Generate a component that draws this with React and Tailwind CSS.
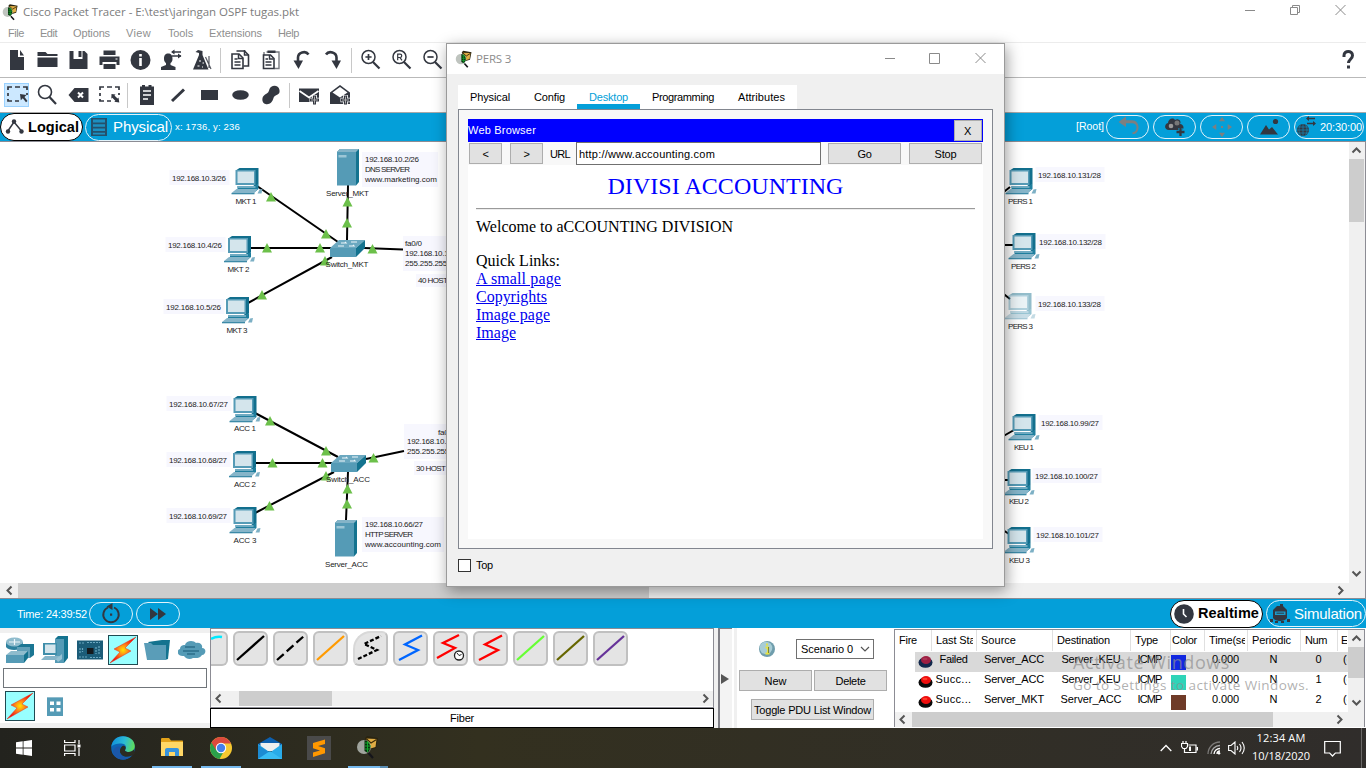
import React, { useLayoutEffect, useRef } from "react";

/* Text whose tracking is computed so that it fills `w` pixels. */
function T({ w, className = "", children }) {
  const ref = useRef(null);
  useLayoutEffect(() => {
    const el = ref.current;
    el.style.letterSpacing = "0px";
    const natural = el.getBoundingClientRect().width;
    el.style.letterSpacing = (w - natural) / String(children).length + "px";
  }, [w, children]);
  return (
    <span ref={ref} className={"inline-block shrink-0 whitespace-pre " + className}>
      {children}
    </span>
  );
}

function Ic({ children, size = 24, className = "" }) {
  return (
    <svg width={size} height={size} viewBox={`0 0 ${size} ${size}`} className={"shrink-0 " + className} fill="#333740">
      {children}
    </svg>
  );
}

function Cell({ children, active }) {
  return (
    <div className="flex h-[34px] w-[31px] shrink-0 items-center justify-center">
      <div className={active ? "flex h-6 w-[25px] items-center justify-center bg-[#cce8ff] outline outline-1 -outline-offset-1 outline-[#99d1ff]" : "flex"}>
        <Ic>{children}</Ic>
      </div>
    </div>
  );
}

const Sep = () => <div className="mx-[3px] h-[25px] w-px shrink-0 bg-[#c8c8c8]" />;

function TracerLogo({ className = "" }) {
  return (
    <svg width="24" height="24" viewBox="0 0 24 24" className={"shrink-0 " + className}>
      <path d="M9 3l2-2 11 2-2 10-7 2z" fill="#2a2410" />
      <path d="M10 3.500l10.500.5-1 8-5 1.500z" fill="#e0ad45" />
      <path d="M10 3.500l5 4.500 5.500-3.500" fill="none" stroke="#3a2a08" strokeWidth="1.200" />
      <circle cx="8" cy="12" r="7" fill="#b4bab4" opacity=".85" />
      <path d="M8.500 5.200a7 7 0 0 1 3 12.500L8.500 16z" fill="#06320c" />
      <path d="M9 8h5M9 11h6M9 14h5M11.500 6v11" stroke="#14a52c" strokeWidth="1" />
      <path d="M12.500 18l4.500 5" stroke="#15151a" strokeWidth="2.200" />
    </svg>
  );
}

const Plus = ({ x, y }) => (
  <g>
    <path d={`M${x} ${y - 5}v10M${x - 5} ${y}h10`} stroke="#fff" strokeWidth="4.6" />
    <path d={`M${x} ${y - 4.5}v9M${x - 4.5} ${y}h9`} stroke="#333740" strokeWidth="3" />
    <path d={`M${x} ${y - 3.5}v7M${x - 3.5} ${y}h7`} stroke="#aaa" strokeWidth="1" />
  </g>
);

const Lens = ({ children }) => (
  <g fill="none" stroke="#333740" strokeWidth="1.5">
    <circle cx="9.5" cy="9" r="6.5" />
    <path d="M14 14l6.500 6.500" strokeWidth="2.200" />
    {children}
  </g>
);

function MenuBar() {
  return (
    <div className="flex h-5 items-center text-[11px] text-[#8f8f8f]">
      <T w={16} className="ml-2">File</T>
      <T w={17} className="ml-4">Edit</T>
      <T w={37} className="ml-4">Options</T>
      <T w={25} className="ml-4">View</T>
      <T w={25} className="ml-[17px]">Tools</T>
      <T w={53} className="ml-4">Extensions</T>
      <T w={21} className="ml-4">Help</T>
    </div>
  );
}

function MainToolbar() {
  return (
    <div className="flex h-[35px] items-center border-b border-[#b9b9b9]">
      <Cell><path d="M6 2h8v7h6v13H6zM16 2l4 5.500h-4z" /></Cell>
      <Cell><path d="M2.500 4h8l2 2h10v2h-20zM2.500 9.500h20V19h-20z" /></Cell>
      <Cell>
        <path d="M3.500 3h15l3 3v15h-18z" />
        <path d="M7.500 3h9v8h-9z" fill="#fff" />
        <path d="M12.500 3h3v6h-3z" />
      </Cell>
      <Cell>
        <path d="M6.500 2.500h12V7h-12zM2.500 8.500h20V17h-3v-3h-14v3h-3z" />
        <path d="M6.500 16h12v5h-12z" />
        <path d="M18.500 10.500h2v1h-2z" fill="#fff" />
      </Cell>
      <Cell>
        <circle cx="12.500" cy="12" r="10" />
        <path d="M11.200 6h2.600v2.400h-2.600zM11.200 10h2.600v8h-2.600z" fill="#fff" />
      </Cell>
      <Cell>
        <path d="M5 11c0-4 1.500-5.500 4.200-5.500S13.500 7 13.500 11c0 2-1 3.500-2 4v2l5 2v3H2v-3l5-2v-2c-1-.5-2-2-2-4z" />
        <path d="M13 4h9M13 8h9" stroke="#333740" strokeWidth="1.600" />
        <path d="M15.500 1.500L12 4l3.500 2.500zM19 5.500L22.500 8 19 10.500z" />
      </Cell>
      <Cell>
        <path d="M5.500 4l2.500-2 4.500 1v4l6 14.500H3L9 7V5z" />
        <path d="M9 13h2M12.500 15h1.500M7.500 18h2M12 19h1" stroke="#fff" strokeWidth="1.200" />
        <path d="M15.500 9l5.500 12M19 8v12" stroke="#555860" strokeWidth="1.200" fill="none" />
      </Cell>
      <Sep />
      <Cell>
        <path d="M8.500 3h8l4 4v11h-5" fill="none" stroke="#333740" strokeWidth="1.600" />
        <path d="M4 6h7l4 4v10.500H4z" fill="#fff" stroke="#333740" strokeWidth="1.600" />
        <path d="M10.500 6v4.500H15M6.500 11h3M6.500 14h6M6.500 17h6M16.500 2v5h4" fill="none" stroke="#333740" strokeWidth="1.500" />
      </Cell>
      <Cell>
        <path d="M7.500 4H20v16.500h-4.500M5 7V4" fill="none" stroke="#777a80" strokeWidth="1.400" />
        <path d="M8.500 2.500h8V5h-8z" />
        <path d="M4.500 7h7l3.500 3.500v10H4.500z" fill="#fff" stroke="#333740" strokeWidth="1.600" />
        <path d="M10.500 7v4h4M6.500 11H9M6.500 14h6M6.500 17h6" fill="none" stroke="#333740" strokeWidth="1.500" />
      </Cell>
      <Cell>
        <path d="M8 14V9.500C8 4.500 15.500 2 18.500 6.500" fill="none" stroke="#333740" strokeWidth="2.600" />
        <path d="M3.500 12.500h9.500L8.500 21z" />
      </Cell>
      <Cell>
        <path d="M15.500 14V9.500C15.500 4.500 8 2 5 6.500" fill="none" stroke="#333740" strokeWidth="2.600" />
        <path d="M10.500 12.500H20L15.500 21z" />
      </Cell>
      <Sep />
      <Cell><Lens><path d="M9.500 5.900v6.200M6.400 9h6.200" strokeWidth="1.700" /></Lens></Cell>
      <Cell><Lens><path d="M7.700 12.300V6.200h2.400a1.600 1.600 0 0 1 0 3.300H7.700M10 9.600l2 2.700" strokeWidth="1.200" /></Lens></Cell>
      <Cell><Lens><path d="M6.400 9h6.200" strokeWidth="1.700" /></Lens></Cell>
      <div className="ml-auto mr-[6px] flex">
        <Ic>
          <path d="M8 9V7.500C8 2 16.500 2 16.500 7.500c0 3.500-4 4-4 7.500" fill="none" stroke="#333740" strokeWidth="3" />
          <path d="M11 17.500h3v3h-3z" />
        </Ic>
      </div>
    </div>
  );
}

const dashRect = <path d="M3 7V4h4M10 4h5M18 4h4v3M3 10v3M3 16v2h4M10 18h4M22 10v2" fill="none" stroke="#333740" strokeWidth="1.700" />;

function EditToolbar() {
  return (
    <div className="flex h-[35px] items-center border-b border-[#a9a9a9]">
      <div className="w-px" />
      <div className="-mr-px flex"><Cell active>{dashRect}<path d="M15 11l6.500 1-2 2 3 4-1.500 1.300-3.200-4-2 2z" /></Cell></div>
      <Cell>
        <g fill="none" stroke="#333740" strokeWidth="1.600"><circle cx="10" cy="9" r="6.500" /><path d="M14.500 14l6.500 7" strokeWidth="2.200" /></g>
      </Cell>
      <Cell>
        <path d="M2.500 12l6-7h14v14h-14z" />
        <path d="M12 9.500l5 5M17 9.500l-5 5" stroke="#fff" strokeWidth="2" />
      </Cell>
      <Cell>{dashRect}<path d="M14.500 11l4 .5-1 1 3 3 1-1 .8 5-5-.8 1-1-3-3-1 1z" /></Cell>
      <Sep />
      <Cell>
        <path d="M5 3.500h2V2h3v1.500h3.500V2h3v1.500H19V22H5z" />
        <path d="M8 8h8M8 12h8M8 16h5" stroke="#fff" strokeWidth="1.700" />
      </Cell>
      <Cell><path d="M6 18L18 6.500" stroke="#333740" strokeWidth="3" /></Cell>
      <Cell><path d="M4 7h17v10H4z" /></Cell>
      <Cell><ellipse cx="12.500" cy="12" rx="8.300" ry="4.800" /></Cell>
      <Cell><path d="M10.500 6c1-4 9-5 10 1s-5 4-6 8-4 7-8 6-4-7-1-9 4-2 5-6z" /></Cell>
      <Sep />
      <Cell>
        <path d="M2 5.500h20V19H2z" />
        <path d="M2.500 8l9.500 6.500L21.500 8" fill="none" stroke="#fff" strokeWidth="1.800" />
        <Plus x={17.500} y={17} />
      </Cell>
      <Cell>
        <path d="M2 9.500L12 2l10 7.500V21H2z" />
        <path d="M4.500 9.500L12 4l7.500 5.500-7.500 5z" fill="#fff" />
        <Plus x={17.500} y={17} />
      </Cell>
    </div>
  );
}

function Pill({ children, className }) {
  return <div className={"flex shrink-0 items-center rounded-full border border-[#e3f3fa] " + className}>{children}</div>;
}

function NavBar() {
  return (
    <div className="flex h-[29px] items-center border-b border-[#8c8c94] bg-[#049fd9] text-white">
      <div className="flex h-[28px] w-[83px] shrink-0 items-center rounded-full border border-black bg-white text-black">
        <Ic size={20} className="ml-1">
          <path d="M2.500 14.500L9 5l7.500 9" fill="none" stroke="#333740" strokeWidth="1.500" />
          <circle cx="9" cy="4.500" r="2.200" /><circle cx="3" cy="14.500" r="2.200" /><circle cx="16.500" cy="14.500" r="2.200" />
        </Ic>
        <T w={51} className="ml-[3px] pt-px text-[14.500px] font-bold">Logical</T>
      </div>
      <Pill className="ml-[2px] h-[27px] w-[87px]">
        <Ic size={20} className="ml-[3px]">
          <path d="M2 1h16v18H2z" fill="#24506b" />
          <path d="M4 2.500h12v3H4zM4 7.300h12v2.500H4zM4 11.500h12V14H4zM4 15.800h12v1.700H4z" fill="#1c8fc0" />
        </Ic>
        <T w={55} className="ml-[4px] pt-px text-[15px]">Physical</T>
      </Pill>
      <T w={65} className="ml-[3px] text-[9.500px]">x: 1736, y: 236</T>
      <T w={28} className="ml-auto mr-[2px] text-[10.500px]">[Root]</T>
      <Pill className="mr-1 h-6 w-[43px] justify-center">
        <Ic><path d="M10 1.500v3.700h6c4.500 0 6.500 3.500 6.500 7s-2 7-6 7v-2c3 0 4-2.500 4-5 0-2.300-1.500-4-4.500-4h-6V12l-7.500-5z" fill="#7d7f80" /></Ic>
      </Pill>
      <Pill className="mr-1 h-6 w-[43px] justify-center">
        <Ic>
          <path d="M6 15c-5 0-5-6-1-7 0-4 5-6 7-3 3-2 7 1 5 4 4 0 5 6 1 6z" />
          <circle cx="8" cy="11" r="2.300" fill="#999" /><circle cx="14" cy="8" r="2.500" fill="#777" />
          <path d="M17.500 13v8M13.500 17h8" stroke="#049fd9" strokeWidth="4" /><path d="M17.500 13v8M13.500 17h8" stroke="#333740" strokeWidth="2.300" />
        </Ic>
      </Pill>
      <Pill className="mr-1 h-6 w-[43px] justify-center">
        <Ic><path d="M12 2l3 4.300H9zM12 22l3-4.300H9zM2 12l4.300-3v6zM22 12l-4.300-3v6zM11 11h2v2h-2z" fill="#7d7f80" /></Ic>
      </Pill>
      <Pill className="mr-1 h-6 w-[43px] justify-center">
        <Ic><circle cx="18.500" cy="6.500" r="2.600" /><path d="M3 19.500l6-9.500 3 4.500 3-2.500 6 7.500z" /></Ic>
      </Pill>
      <Pill className="mr-[2px] h-6 w-[70px]">
        <Ic>
          <circle cx="8" cy="15" r="6" />
          <path d="M2 15h12M3 12h10M3 18h10M8 9v12M5.500 9.500c-2 4-2 7 0 11M10.500 9.500c2 4 2 7 0 11" fill="none" stroke="#1782ad" strokeWidth=".8" />
          <path d="M12 3.500h8M12 8.500h8" stroke="#333740" strokeWidth="1.500" /><path d="M14 1L11 3.500 14 6zM18 6l3 2.500-3 2.500z" />
        </Ic>
        <T w={42} className="ml-[1px] text-[11px]">20:30:00</T>
      </Pill>
    </div>
  );
}

/* ---------- topology ---------- */
const PC = ({ x, y, faded }) => (
  <g transform={`translate(${x} ${y})`} opacity={faded ? 0.45 : 1}>
    <path d="M1 2l3-2h19v16l-3 3z" fill="#126f8d" />
    <path d="M0 2h20v15H0z" fill="#559bb6" />
    <path d="M2 3.500h16.500V15H2z" fill="#d4e5ec" />
    <path d="M2 18h17l4-2v5l-3 2.500H2z" fill="#1f7f9e" />
    <path d="M2 18h18v2H2z" fill="#6fabc2" />
    <path d="M-4 25l5-4h21l-3 4z" fill="#86b5c9" />
    <path d="M-4 25h23v1.300H-4z" fill="#3d8aa7" />
    <path d="M22 25.500l2-4 3-.5-1 4.500z" fill="#7db0c5" />
  </g>
);
const Server = ({ x, y }) => (
  <g transform={`translate(${x} ${y})`}>
    <path d="M0 3l3-3h19v33l-3 3.500z" fill="#14738f" />
    <path d="M0 3l3-3h19l-3 3z" fill="#84b4c8" />
    <path d="M0 3h19v33.500H0z" fill="#559bb6" />
    <path d="M1.500 6h8v2.500h-8z" fill="#9cc6d6" />
  </g>
);
const Switch = ({ x, y }) => (
  <g transform={`translate(${x} ${y})`}>
    <path d="M0 8l9-8h26l-9 8z" fill="#6ba8c0" />
    <path d="M26 8l9-8v8l-9 9z" fill="#14738f" />
    <path d="M0 8h26v9H0z" fill="#559bb6" />
    <path d="M11 3h5l-1-1M21 2h6M8 6h6M19 6h5l-1-1" fill="none" stroke="#eef6fa" strokeWidth="1.100" />
  </g>
);

const pcs = [
  [235.500, 168, "MKT 1", 246, 204, 21], [228, 236, "MKT 2", 238.5, 272, 22], [226, 297, "MKT 3", 237, 333, 21],
  [233.500, 396, "ACC 1", 245, 431, 22], [233, 451, "ACC 2", 245, 487, 22], [233.500, 507, "ACC 3", 245, 543, 23],
  [1009.500, 168, "PERS 1", 1020.5, 204, 25], [1012.500, 233, "PERS 2", 1023.5, 269, 25], [1008.500, 293, "PERS 3", 1020.5, 329, 25],
  [1012.500, 414, "KEU 1", 1024, 450, 20], [1007.500, 469, "KEU 2", 1019, 504, 20], [1007.500, 527, "KEU 3", 1019.5, 563, 21],
];
const notes = [
  [172, 181, 54, "192.168.10.3/26"], [168, 248, 54, "192.168.10.4/26"], [166, 310, 55, "192.168.10.5/26"],
  [169, 407, 59, "192.168.10.67/27"], [169, 463, 58, "192.168.10.68/27"], [169, 519, 58, "192.168.10.69/27"],
  [1038, 178, 63, "192.168.10.131/28"], [1039, 245, 63, "192.168.10.132/28"], [1038, 307, 63, "192.168.10.133/28"],
  [1041, 426, 58, "192.168.10.99/27"], [1035, 479, 63, "192.168.10.100/27"], [1036, 538, 63, "192.168.10.101/27"],
];
const texts = [
  [365, 162, 54, "192.168.10.2/26"], [365, 172, 45, "DNS SERVER"], [365, 182, 72, "www.marketing.com"],
  [326, 196, 43, "Server_MKT"], [325.500, 267, 43, "Switch_MKT"], [405, 246, 17, "fa0/0"],
  [405, 256, 54, "192.168.10.1/26"], [405, 266, 57, "255.255.255.192"], [418, 283, 30, "40 HOST"],
  [438, 435, 17, "fa0/0"], [407, 444, 58, "192.168.10.65/27"], [407, 454, 57, "255.255.255.224"], [416, 471, 30, "30 HOST"],
  [326, 482, 44, "Switch_ACC"], [325, 567, 43, "Server_ACC"],
  [365, 527, 58, "192.168.10.66/27"], [365, 537, 48, "HTTP SERVER"], [365, 547, 76, "www.accounting.com"],
];
const links = "M257 186L338 242M250 248H332M248 303L332 257M348 185L347 240M364 248L403 249.500M255 413L338 457M255 463H332M255 513L334 472M366 459L404 451M348 472L346 520M1000 195L1010 187M1000 245H1013M1000 291L1010 299M1000 438L1014 430M1000 480H1008M1000 528L1009 534";
const marks = [[271, 197], [326, 234], [267, 248], [320, 248], [262, 295], [325, 261], [347.500, 202], [347, 223], [372.500, 249], [270, 421], [326, 451], [272.500, 463], [322.500, 463], [269.500, 506], [326, 476], [373.500, 458], [347.500, 489], [347, 504]];

function Topology() {
  return (
    <svg width="1349" height="441" viewBox="0 142 1349 441" className="shrink-0 bg-white" fontFamily="Liberation Sans, Arial, sans-serif" fontSize="8" fill="#222">
      <g fill="#f7f7fe">
        <path d="M362 152h76v35h-76zM403 236h50v35h-50zM416 274h40v13h-40zM404 424h50v35h-50zM414 461h40v14h-40zM362 517h82v35h-82z" />
        {notes.map((n) => <rect key={n[3]} x={n[0] - 2.500} y={n[1] - 11} width={n[2] + 6} height="15" />)}
      </g>
      <path d={links} stroke="#000" strokeWidth="2" fill="none" />
      {pcs.map((p) => <PC key={p[2]} x={p[0]} y={p[1]} faded={p[2] === "PERS 3"} />)}
      <Server x={337} y={149} /><Server x={335} y={520} />
      <Switch x={330} y={240} /><Switch x={331} y={455} />
      {marks.map(([x, y]) => <path key={x + "-" + y} d={`M${x} ${y - 5}l5 9.500h-10z`} fill="#6cc04a" />)}
      {pcs.map((p) => <text key={p[2]} x={p[3] - p[5] / 2} y={p[4]} textLength={p[5]}>{p[2]}</text>)}
      {notes.concat(texts).map((n) => <text key={n[3] + n[1]} x={n[0]} y={n[1]} textLength={n[2]}>{n[3]}</text>)}
    </svg>
  );
}

const arrows = { up: "M4 10l4-4 4 4", down: "M4 6l4 4 4-4", left: "M10 4L6 8l4 4", right: "M6 4l4 4-4 4" };
const Arrow = ({ dir }) => (
  <svg width="15" height="15" viewBox="0.5 0.5 15 15" className="shrink-0"><path d={arrows[dir]} fill="none" stroke="#555" strokeWidth="2" /></svg>
);

function Workspace() {
  return (
    <div className="flex h-[457px] flex-col border-b border-r border-[#8c8c94] bg-[#f0f0f0]">
      <div className="flex h-[441px]">
        <Topology />
        <div className="flex w-[15px] flex-col items-center">
          <div className="flex h-[17px] items-center"><Arrow dir="up" /></div>
          <div className="h-[63px] w-full bg-[#cdcdcd]" />
          <div className="mt-auto pb-[2px]"><Arrow dir="down" /></div>
        </div>
      </div>
      <div className="flex h-[15px] pr-[17px]">
        <div className="w-[18px] pl-[2px]"><Arrow dir="left" /></div>
        <div className="h-full w-[631px] bg-[#cdcdcd]" />
        <div className="ml-auto"><Arrow dir="right" /></div>
      </div>
    </div>
  );
}

function TimeBar() {
  return (
    <div className="flex h-[29px] items-center bg-[#049fd9] text-white">
      <T w={70} className="ml-[17px] pt-px text-[11px]">Time: 24:39:52</T>
      <Pill className="ml-[2px] h-6 w-[44px] justify-center">
        <Ic><path d="M9 5.500A7.700 7.700 0 1 0 15 5.500" fill="none" stroke="#333740" strokeWidth="1.900" /><path d="M7.500 4.500l6-3.500v7zM11 11.500h2.200v2.200H11z" /></Ic>
      </Pill>
      <Pill className="ml-[3px] h-6 w-[44px] justify-center">
        <Ic><path d="M4 6l8 6-8 6zM12 6l8 6-8 6z" /></Ic>
      </Pill>
      <div className="ml-auto flex h-[28px] w-[93px] items-center rounded-full border border-black bg-white text-black">
        <Ic size={20} className="ml-[3px]"><circle cx="10" cy="10" r="9.800" /><path d="M9.500 5v5l3 3" fill="none" stroke="#fff" strokeWidth="1.600" /></Ic>
        <T w={61} className="ml-[4px] pt-px text-[14.500px] font-bold">Realtime</T>
      </div>
      <Pill className="ml-[3px] h-[27px] w-[100px]">
        <Ic size={22} className="ml-[2px]">
          <path d="M8 3h3V1h3v2l4 4v8c-2 4-12 4-14 0V7z" /><path d="M6 8.500h10.500v3.500H6z" fill="#1c9ac8" /><path d="M7.500 10.200h7.500" stroke="#333740" />
          <path d="M1 16h3v3H1zM6 18h3v2H6zM12 18h3v2h-3zM18 16h3v3h-3z" />
        </Ic>
        <T w={68} className="ml-[3px] pt-[2px] text-[15px]">Simulation</T>
      </Pill>
    </div>
  );
}

/* ---------- device dock ---------- */
const Bolt = () => (
  <div className="h-[30px] w-[30px] shrink-0 border border-[#1f4a52] bg-[#98ffff]">
    <svg width="28" height="28" viewBox="0 0 28 28">
      <defs><radialGradient id="flame"><stop offset="0" stopColor="#ffe600" /><stop offset=".45" stopColor="#ff7a1a" /><stop offset="1" stopColor="#f20d0d" /></radialGradient></defs>
      <path d="M27 1L5 13l6 3L1 27l21-12-6-3z" fill="url(#flame)" stroke="#e0341a" strokeWidth=".5" />
    </svg>
  </div>
);

function DeviceTypes() {
  return (
    <div className="flex w-[210px] shrink-0 flex-col border-y-[5px] border-[#f0f0f0] bg-white">
      <div className="flex h-[35px] items-center pb-px pl-[5px]">
        <svg width="30" height="28" viewBox="0 0 30 28" className="shrink-0">
          <path d="M1 6v5c2 4 14 4 17 0V6z" fill="#2d819e" /><ellipse cx="9.500" cy="6" rx="8.500" ry="4.500" fill="#8fbccd" />
          <path d="M4 6h11M9.500 3v6" stroke="#eef6fa" strokeWidth="1.200" />
          <path d="M12 11l4-3h13v11l-4 3H12z" fill="#1b7693" /><path d="M12 11h13v11H12z" fill="#5f9fb8" />
          <path d="M1 19l5-4h17l-4 4z" fill="#8fbccd" /><path d="M1 19h18v8H1z" fill="#559bb6" /><path d="M19 19l4-4v7l-4 5z" fill="#14738f" />
        </svg>
        <svg width="30" height="28" viewBox="0 0 30 28" className="ml-[5px] shrink-0">
          <path d="M15 3l3-3h10v22l-4 5h-9z" fill="#14738f" /><path d="M15 3h9v24h-9z" fill="#559bb6" />
          <path d="M3 7h14v12H3z" fill="#3f8eaa" /><path d="M5 8.500h10.500v8.500H5z" fill="#d4e5ec" />
          <path d="M1 24l4-4h15l-3 4z" fill="#86b5c9" /><path d="M16 23l6-5v5l-4 3z" fill="#96c2d3" />
        </svg>
        <svg width="26" height="20" viewBox="0 0 26 20" className="ml-[7px] shrink-0">
          <path d="M0 .5h26v19H0z" fill="#1b5c78" /><path d="M10 8h6.500v6H10z" fill="#15191d" />
          <path d="M2 3h5M10 2.500h13M2 17h8M13 17.500h11M19 7v7M22 6v8M3 8v5M5.500 8v4" stroke="#6aa7c0" strokeWidth="1.200" strokeDasharray="2 1" />
        </svg>
        <div className="ml-[5px]"><Bolt /></div>
        <svg width="28" height="22" viewBox="0 0 28 22" className="ml-[6px] shrink-0">
          <path d="M4 3l14-2h8l-2 19-3 1z" fill="#14738f" /><path d="M0 4h7l2 2h13v15H3z" fill="#5a9db8" />
        </svg>
        <svg width="28" height="20" viewBox="0 0 28 20" className="ml-[6px] shrink-0">
          <path d="M6 16c-7 1-8-6-4-7 0-4 4-4 5-4 1-5 9-5 11-2 4-1 7 2 6 5 5 0 4 7 0 7-2 4-7 3-9 3-3 2-7 1-9-2z" fill="#559bb6" />
          <path d="M7 7h10M5 11h16M9 14h8" stroke="#2b6f8a" strokeWidth="1.400" />
        </svg>
      </div>
      <div className="mx-[3px] h-[20px] border border-[#70757a] bg-white" />
      <div className="flex items-center pl-[5px] pt-[3px]">
        <Bolt />
        <svg width="16" height="19" viewBox="0 0 16 19" className="ml-[12px]">
          <path d="M0 0h16v19H0z" fill="#559bb6" /><path d="M0 0h16v1H0z" fill="#8fbccd" />
          <path d="M3 4.500h4v3.500H3zM9.500 4.500h4v3.500h-4zM3 11h4v3.500H3zM9.500 11h4v3.500h-4z" fill="#fff" />
        </svg>
      </div>
    </div>
  );
}

const cables = [
  { c: "#000", d: "M4 29L31 5" },
  { c: "#000", d: "M4 29L31 5", dash: "9 4" },
  { c: "#ff9a00", d: "M4 29L31 5" },
  { c: "#000", d: "M5 28L24 19 11 13 28 5", dash: "4 2", corner: true },
  { c: "#0066ff", d: "M6 29L25 19 12 13.500 29 4.500" },
  { c: "#f00", d: "M4 27L22 17 10 12 26 4", clock: true },
  { c: "#f00", d: "M6 29L25 19 12 13.500 29 4.500" },
  { c: "#66ff33", d: "M4 29L31 5" },
  { c: "#666600", d: "M4 29L31 5" },
  { c: "#663399", d: "M4 29L31 5" },
];

function Cables() {
  return (
    <div className="flex w-[504px] shrink-0 flex-col">
      <div className="flex h-[80px] flex-col border border-[#8c8c94] bg-white">
        <div className="flex h-[62px] gap-[5px] overflow-hidden pt-[2px]">
          <div className="h-[35px] w-[17px] rounded-r-md border-2 border-l-0 border-[#c0c0c0] bg-[#e4e4e4]">
            <svg width="14" height="14"><path d="M0 6Q5 3 11 4" fill="none" stroke="#00eaff" strokeWidth="2.500" /></svg>
          </div>
          {cables.map((k, i) => (
            <div key={i} className={(k.corner ? "rounded-tl-[18px] border-l-[#d8d8d8] border-t-[#d8d8d8] " : "rounded-tl-md border-l-[#c0c0c0] border-t-[#c0c0c0] ") + "h-[35px] w-[35px] shrink-0 rounded-r-md rounded-bl-md border-2 border-b-[#c0c0c0] border-r-[#c0c0c0] bg-[#e4e4e4]"}>
              <svg width="35" height="35" viewBox="0 0 35 35" className="-ml-[2px] -mt-[2px]">
                <path d={k.d} fill="none" stroke={k.c} strokeWidth="2.300" strokeDasharray={k.dash} />
                {k.clock && <g><circle cx="26" cy="24.500" r="4.500" fill="#fff" stroke="#222" strokeWidth="1.300" /><path d="M24 22l2 2.500 2.500-1" fill="none" stroke="#222" /></g>}
              </svg>
            </div>
          ))}
        </div>
        <div className="flex h-[15px] bg-[#f0f0f0]">
          <div className="w-[28px]"><Arrow dir="left" /></div>
          <div className="h-full w-[93px] bg-[#cdcdcd]" />
          <div className="ml-auto"><Arrow dir="right" /></div>
        </div>
      </div>
      <div className="flex h-[20px] items-center justify-center border border-black bg-white text-[11px]">
        <T w={24}>Fiber</T>
      </div>
    </div>
  );
}

const Btn = ({ w, className = "", children }) => (
  <div className={"flex shrink-0 items-center justify-center border border-[#adadad] bg-[#e1e1e1] " + className}><T w={w}>{children}</T></div>
);

function Scenario() {
  return (
    <div className="flex w-[157px] shrink-0 flex-col bg-white pl-[2px] text-[11px]">
      <div className="flex pl-[19px] pt-[11px]">
        <svg width="18" height="18" viewBox="0 0 18 18" className="mt-px">
          <circle cx="9" cy="9" r="8" fill="#6f9dac" /><circle cx="8" cy="8" r="6.300" fill="#a8cdd6" />
          <path d="M9 3.500v2M7.500 7.500H10V13M7.500 13.500h4" fill="none" stroke="#e8e23c" strokeWidth="1.800" /><path d="M10.600 7v6" stroke="#55602a" strokeWidth=".8" />
        </svg>
        <div className="ml-5 flex h-5 w-[78px] items-center border border-[#707070] pl-1">
          <T w={52}>Scenario 0</T>
          <svg width="10" height="10" viewBox="0 0 10 10" className="ml-[7px]"><path d="M1 3l4 4 4-4" fill="none" stroke="#555" strokeWidth="1.200" /></svg>
        </div>
      </div>
      <div className="mt-[11px] flex gap-[2px]">
        <Btn w={22} className="h-[21px] w-[73px] pt-px">New</Btn>
        <Btn w={30} className="h-[21px] w-[73px] pt-px">Delete</Btn>
      </div>
      <div className="mt-2 pl-3"><Btn w={117} className="h-[21px] w-[123px] pt-px">Toggle PDU List Window</Btn></div>
    </div>
  );
}

const FireDot = ({ dim }) => (
  <svg width="16" height="14" viewBox="0 0 16 14">
    <ellipse cx="7.500" cy="7.500" rx="7" ry="5.300" fill={dim ? "#12284c" : "#0a0a0a"} />
    <ellipse cx="8" cy="5" rx="5" ry="4" fill={dim ? "#9e1f42" : "#ee0d0d"} />
    <ellipse cx="7" cy="4" rx="2.500" ry="1.300" fill={dim ? "#ab3554" : "#ff3a2a"} />
  </svg>
);

const Head = ({ w, children, className }) => (
  <div className={"flex h-[21px] shrink-0 items-center border-r border-[#e0e0e0] " + className}><T w={w}>{children}</T></div>
);

const rows = [
  { s: "Failed", sw: 28, from: "Server_ACC", to: "Server_KEU", tw: 59, n: "0", sel: true, color: "bg-[#1228e0]" },
  { s: "Succ...", sw: 36, from: "Server_ACC", to: "Server_KEU", tw: 59, n: "1", color: "bg-[#2ed4b8]" },
  { s: "Succ...", sw: 36, from: "Server_MKT", to: "Server_ACC", tw: 61, n: "2", color: "bg-[#6f3b28]" },
];

function PduList() {
  return (
    <div className="flex w-[471px] shrink-0 flex-col pt-px text-[11px]">
      <div className="flex h-[98px] flex-col border-l border-r border-t border-[#8c8c94] bg-white">
        <div className="flex h-[82px]">
          <div className="flex w-[453px] flex-col overflow-hidden">
            <div className="flex h-[22px]">
              <Head w={18} className="w-[37px] pl-[4px]">Fire</Head>
              <div className="flex h-[21px] w-[45px] items-center border-r border-[#e0e0e0] pl-[4px]"><div className="flex w-[37px] overflow-hidden"><T w={54}>Last Status</T></div></div>
              <Head w={35} className="w-[76px] pl-[4px]">Source</Head>
              <Head w={53} className="w-[78px] pl-[4px]">Destination</Head>
              <Head w={23} className="w-[40px] pl-[4px]">Type</Head>
              <Head w={25} className="w-[34px] pl-[1px]">Color</Head>
              <div className="flex h-[21px] w-[43px] items-center border-r border-[#e0e0e0] pl-[4px]"><div className="flex w-[36px] overflow-hidden"><T w={47}>Time(sec)</T></div></div>
              <Head w={39} className="w-[53px] pl-[4px]">Periodic</Head>
              <Head w={22} className="w-[37px] pl-[4px]">Num</Head>
              <div className="flex h-[21px] w-[9px] items-center overflow-hidden pl-[3px]"><T w={18}>Edit</T></div>
            </div>
            {rows.map((r) => (
              <div key={r.n} className="flex h-5 pl-5">
                <div className={"flex h-5 w-[433px] leading-[15px] " + (r.sel ? "bg-[#d9d9d9]" : "")}>
                  <div className="w-[17px] pl-[3px] pt-[3px]"><FireDot dim={r.sel} /></div>
                  <div className="flex w-[43px] justify-center">{<T w={r.sw}>{r.s}</T>}</div>
                  <div className="flex w-[78px] justify-center"><T w={60}>{r.from}</T></div>
                  <div className="flex w-[76px] justify-center"><T w={r.tw}>{r.to}</T></div>
                  <div className="flex w-[41px] justify-center"><T w={24}>ICMP</T></div>
                  <div className="w-[34px] pl-px pt-[3px]"><div className={"h-[15px] w-[15px] " + r.color} /></div>
                  <div className="flex w-[43px] justify-center"><T w={27}>0.000</T></div>
                  <div className="flex w-[53px] justify-center"><T w={8}>N</T></div>
                  <div className="flex w-[37px] justify-center"><T w={6}>{r.n}</T></div>
                  <div className="w-[10px] overflow-hidden pl-[6px]">(edit)</div>
                </div>
              </div>
            ))}
          </div>
          <div className="flex w-[16px] flex-col items-center bg-[#f0f0f0]">
            <div className="flex h-[17px] items-center"><Arrow dir="up" /></div>
            <div className="h-[31px] w-full bg-[#cdcdcd]" />
            <div className="mt-auto pb-[2px]"><Arrow dir="down" /></div>
          </div>
        </div>
        <div className="flex h-[15px] bg-[#f0f0f0] pr-[17px]">
          <div className="w-[17px]"><Arrow dir="left" /></div>
          <div className="h-full w-[361px] bg-[#cdcdcd]" />
          <div className="ml-auto"><Arrow dir="right" /></div>
        </div>
      </div>
    </div>
  );
}

function Dock() {
  return (
    <div className="flex h-[100px] bg-white">
      <DeviceTypes />
      <Cables />
      <div className="w-[4px] shrink-0 bg-[#f0f0f0]" />
      <div className="flex w-[14px] shrink-0 items-center justify-center border-l-2 border-t border-[#7f7f86] bg-[#f3f3f3]">
        <svg width="9" height="10" className="mr-[2px]"><path d="M0 0l8 5-8 5z" fill="#555" /></svg>
      </div>
      <div className="w-[5px] shrink-0 border-l-2 border-white bg-[#f0f0f0]" />
      <Scenario />
      <PduList />
    </div>
  );
}

/* ---------- taskbar ---------- */
const Task = ({ children, run }) => (
  <div className="flex h-10 w-[49px] shrink-0 flex-col items-center justify-end">
    <div className="flex h-[38px] items-center pt-px">{children}</div>
    <div className={"h-[2px] w-10 " + (run || "")} />
  </div>
);

function Taskbar() {
  return (
    <div className="flex h-10 items-center bg-gradient-to-r from-[#23231e] via-[#33301f] via-35% to-[#302d2b] font-['Open_Sans','Noto_Sans',sans-serif] text-white">
      <Task>
        <svg width="16" height="16" viewBox="0 0 16 16" fill="#fff" className="mr-px"><path d="M0 2.300l6.700-1v6.300H0zM7.500 1.200L16 0v7.600H7.500zM0 8.400h6.700v6.300L0 13.800zM7.500 8.400H16V16l-8.500-1.200z" /></svg>
      </Task>
      <Task>
        <svg width="17" height="16" viewBox="0 0 17 16" fill="none" stroke="#fff" strokeWidth="1.200" className="mr-[3px]"><path d="M.600 0v2.500H11V0M.600 16v-2.500H11V16M.600 5H11v6H.600zM15 0v4M15 8v8" /><path d="M13.500 4.500h3v3h-3z" fill="#fff" stroke="none" /></svg>
      </Task>
      <Task>
        <svg width="24" height="24" viewBox="0 0 24 24">
          <defs><linearGradient id="edge" x1="0" x2="1" y1=".3" y2=".5"><stop offset="0" stopColor="#0f8fdb" /><stop offset=".55" stopColor="#2bbbd5" /><stop offset="1" stopColor="#5fdc5a" /></linearGradient></defs>
          <circle cx="12" cy="12" r="11.800" fill="#0d64b5" />
          <path d="M.300 11C1 4 6 .2 12 .2S23.800 4 23.800 10c0 4-3 6-6.500 6-2 0-4-1-3-2.500 2-3-.3-6-4-6C5 7.500 1.500 9 .300 11z" fill="url(#edge)" />
          <path d="M14.300 13.500c-1 1.500 1 2.500 3 2.500 2.500 0 4.500-1 5.500-2.500L24 18l-4 2c-6 2.500-12-1-11-6 .3-2 2-4 3-4.300 2 0 3.500 1.500 2.300 3.800z" fill="#2b2b22" />
          <path d="M9.500 11c-3 5 1 10 6 10.500 2 0 4-.5 5.500-2-6 7-18 4-19-3 0-4 4-7 7.500-5.500z" fill="#1b57a8" />
        </svg>
      </Task>
      <Task run="bg-[#76b9ed]">
        <svg width="22" height="19" viewBox="0 0 22 19" className="ml-[1px]">
          <path d="M0 1.500C0 .5.500 0 1 0h7l2 2.500h11c.6 0 1 .4 1 1V18H0z" fill="#e3a21a" /><path d="M0 4h22v14H0z" fill="#ffd766" />
          <path d="M4 18v-6c0-1.300 1-2 2-2h10c1.200 0 2 .7 2 2v6h-4v-4H8v4z" fill="#3793dd" />
        </svg>
      </Task>
      <Task run="bg-[#76b9ed]">
        <svg width="22" height="22" viewBox="0 0 22 22">
          <circle cx="11" cy="11" r="11" fill="#f6c931" />
          <path d="M1.500 5.500A11 11 0 0 0 9.500 21.900L14 14 11 8z" fill="#2ba14b" />
          <path d="M1.500 5.500A11 11 0 0 1 20.500 5.500L21 6.500H11L6 13z" fill="#dc4a3d" />
          <circle cx="11" cy="11" r="5.200" fill="#fff" /><circle cx="11" cy="11" r="4.200" fill="#4680ea" />
        </svg>
      </Task>
      <Task>
        <svg width="24" height="22" viewBox="0 0 24 22"><path d="M0 7L12 0l12 7v3H0z" fill="#0d5fae" /><path d="M2.500 6h19v8h-19z" fill="#eee" /><path d="M0 7l12 8.500L24 7v15H0z" fill="#29abe9" /><path d="M0 22V8l14 9-4 5z" fill="#1c8bd2" /><path d="M0 22l12-8 12 8z" fill="#39bcf3" /></svg>
      </Task>
      <Task>
        <svg width="24" height="24" viewBox="0 0 24 24"><path d="M0 0h24v24H0z" fill="#4a4a4a" /><path d="M6 7l12-3.500v4.500l-7 2 7 2.200v5L6 21v-4.500l7-2-7-2.200z" fill="#ff9800" /></svg>
      </Task>
      <Task run="border-r-[8px] border-[#5a8db3] bg-[#76b9ed]"><TracerLogo className="-mt-px" /></Task>
      <div className="ml-auto flex items-center">
        <svg width="12" height="8" viewBox="0 0 12 8"><path d="M.700 7L6 1.500 11.300 7" fill="none" stroke="#fff" strokeWidth="1.300" /></svg>
        <svg width="17" height="14" viewBox="0 0 17 14" className="ml-[9px]" fill="none" stroke="#fff" strokeWidth="1.200"><path d="M7.500 4H15v7.500H6.500M16.400 6v3.500M2 0v2.500M5 0v2.500M.500 2.500h6v3L5 7.500H2L.500 5.500zM3.500 7.500v4h3" /><path d="M8 5.500h2V10H8z" fill="#fff" stroke="none" /></svg>
        <svg width="14" height="14" viewBox="0 0 14 14" className="ml-[9px]" fill="none" strokeWidth="1.300">
          <path d="M1 13A12 12 0 0 1 13 1" stroke="#7c7a78" /><path d="M4 13a9 9 0 0 1 9-8.500" stroke="#aaa" /><path d="M7 13a6 6 0 0 1 6-5.500M10 13a3 3 0 0 1 3-3" stroke="#fff" /><circle cx="12" cy="12.200" r="1.300" fill="#fff" stroke="none" />
        </svg>
        <svg width="17" height="14" viewBox="0 0 17 14" className="ml-[7px]" fill="none" stroke="#fff" strokeWidth="1.100"><path d="M.600 4.500H3L7 1v12L3 9.500H.600zM9 5q1.500 2 0 4M11.500 3q3 4 0 8M14 1q4.500 6 0 12" /></svg>
        <div className="mb-[2px] ml-[6px] flex w-[60px] flex-col items-center text-[11px] leading-[18px]">
          <T w={49}>12:34 AM</T>
          <T w={58}>10/18/2020</T>
        </div>
        <svg width="17" height="17" viewBox="0 0 17 17" className="ml-[13px] mr-[20px]"><path d="M.700 1.500h15.600v11.500h-5L8.500 16 5.700 13H.700z" fill="none" stroke="#fff" strokeWidth="1.200" /></svg>
        <div className="mr-1 h-10 w-px bg-[#6a6867]" />
      </div>
    </div>
  );
}

/* ---------- device window ---------- */
const Link = ({ w, children }) => (
  <div className="flex h-[18px] items-center"><a className="flex text-[#0000ee]"><T w={w} className="underline">{children}</T></a></div>
);

function DeviceWindow() {
  return (
    <div className="absolute left-[446px] top-[43px] flex h-[544px] w-[559px] flex-col border border-[#9a9a9a] bg-[#f0f0f0] shadow-[2px_4px_14px_rgba(0,0,0,0.38)]">
      <div className="flex h-[30px] shrink-0 items-center bg-white">
        <TracerLogo className="-mr-[4px] ml-[7px] h-[18px] w-[20px]" />
        <T w={35} className="ml-[6px] font-['Open_Sans','Noto_Sans',sans-serif] text-[11.500px] text-[#8c8c8c]">PERS 3</T>
        <svg width="104" height="12" viewBox="0 0 104 12" className="mb-[2px] ml-auto mr-[18px]" fill="none" stroke="#8a8a8a"><path d="M3 6.500h10M47.500 1.500h10v10h-10zM93.500 1l10 10M103.500 1l-10 10" /></svg>
      </div>
      <div className="ml-[11px] mt-[11px] flex h-6 w-[339px] shrink-0 bg-white text-[11px] text-black">
        <div className="flex w-[64px] items-center justify-center"><T w={40}>Physical</T></div>
        <div className="flex w-[55px] items-center justify-center"><T w={31}>Config</T></div>
        <div className="flex w-[63px] items-center justify-center border-b-[5px] border-[#049fd9] pt-[5px] text-[#049fd9]"><T w={39}>Desktop</T></div>
        <div className="flex w-[86px] items-center justify-center"><T w={62}>Programming</T></div>
        <div className="flex w-[71px] items-center justify-center"><T w={47}>Attributes</T></div>
      </div>
      <div className="ml-[11px] flex h-[440px] w-[535px] shrink-0 flex-col border border-[#82868f] bg-[#f8f8f8] px-[9px] pt-[9px] text-[11px]">
        <div className="flex h-[23px] shrink-0 items-center justify-between bg-[#0000ff] pr-px text-white">
          <T w={68}>Web Browser</T>
          <Btn w={8} className="h-[21px] w-[28px] pt-px text-black">X</Btn>
        </div>
        <div className="flex h-[23px] shrink-0 items-center pl-px">
          <Btn w={6} className="h-[21px] w-[33px] pt-px">{"<"}</Btn>
          <Btn w={6} className="ml-2 h-[21px] w-[33px] pt-px">{">"}</Btn>
          <T w={20} className="ml-[7px] pt-px">URL</T>
          <div className="ml-[6px] flex h-[23px] w-[245px] items-center border border-[#707070] bg-white pl-[2px] pt-px"><T w={136}>http://www.accounting.com</T></div>
          <Btn w={14} className="ml-[7px] h-[21px] w-[73px] pt-px">Go</Btn>
          <Btn w={22} className="ml-2 h-[21px] w-[73px] pt-px">Stop</Btn>
        </div>
        <div className="flex h-[374px] shrink-0 flex-col bg-white px-2 font-['Liberation_Serif',serif] text-[16px] text-black">
          <div className="mt-[7px] flex h-7 items-center justify-center text-[24px] text-[#0000ff]"><T w={236}>DIVISI ACCOUNTING</T></div>
          <div className="mt-[8px] h-[2px] border-b border-t border-b-[#ededed] border-t-[#9a9a9a]" />
          <div className="mt-[8px] flex h-[18px] items-center"><T w={257}>Welcome to aCCOUNTING DIVISION</T></div>
          <div className="mt-4 flex h-[18px] items-center"><T w={84}>Quick Links:</T></div>
          <Link w={85}>A small page</Link>
          <Link w={71}>Copyrights</Link>
          <Link w={74}>Image page</Link>
          <Link w={40}>Image</Link>
        </div>
      </div>
      <div className="ml-[11px] mt-[8px] flex items-center text-[11px]">
        <div className="h-[13px] w-[13px] border border-[#333] bg-white" />
        <T w={17} className="ml-[5px]">Top</T>
      </div>
    </div>
  );
}

export default function App() {
  return (
    <div className="relative flex h-[768px] w-[1366px] flex-col overflow-hidden bg-white font-['Liberation_Sans',Arial,sans-serif] text-black">
      <div className="flex h-[23px] items-center">
        <TracerLogo className="ml-[2px] h-[18px] w-[17px]" />
        <T w={276} className="ml-1 mt-px font-['Open_Sans','Noto_Sans',sans-serif] text-[11.500px] text-[#7c7c7c]">Cisco Packet Tracer - E:\test\jaringan OSPF tugas.pkt</T>
        <svg width="104" height="12" viewBox="0 0 104 12" className="mb-[3px] ml-auto mr-[19px]" fill="none" stroke="#8a8a8a"><path d="M2 6.500h10M47.500 3.500h7v7h-7zM49.500 3.500v-2h7v7h-2M92.500 1l10 10M102.500 1l-10 10" /></svg>
      </div>
      <div className="h-5 border-b border-[#ececec]"><MenuBar /></div>
      <MainToolbar />
      <EditToolbar />
      <NavBar />
      <Workspace />
      <TimeBar />
      <Dock />
      <Taskbar />
      <DeviceWindow />
      <div className="absolute left-[1073px] top-[650px] flex flex-col font-['Open_Sans','Noto_Sans',sans-serif] text-[#8e8e8e]/70">
        <T w={157} className="self-start text-[18px] leading-[25px]">Activate Windows</T>
        <T w={236} className="self-start text-[13.500px] leading-5">Go to Settings to activate Windows.</T>
      </div>
    </div>
  );
}
